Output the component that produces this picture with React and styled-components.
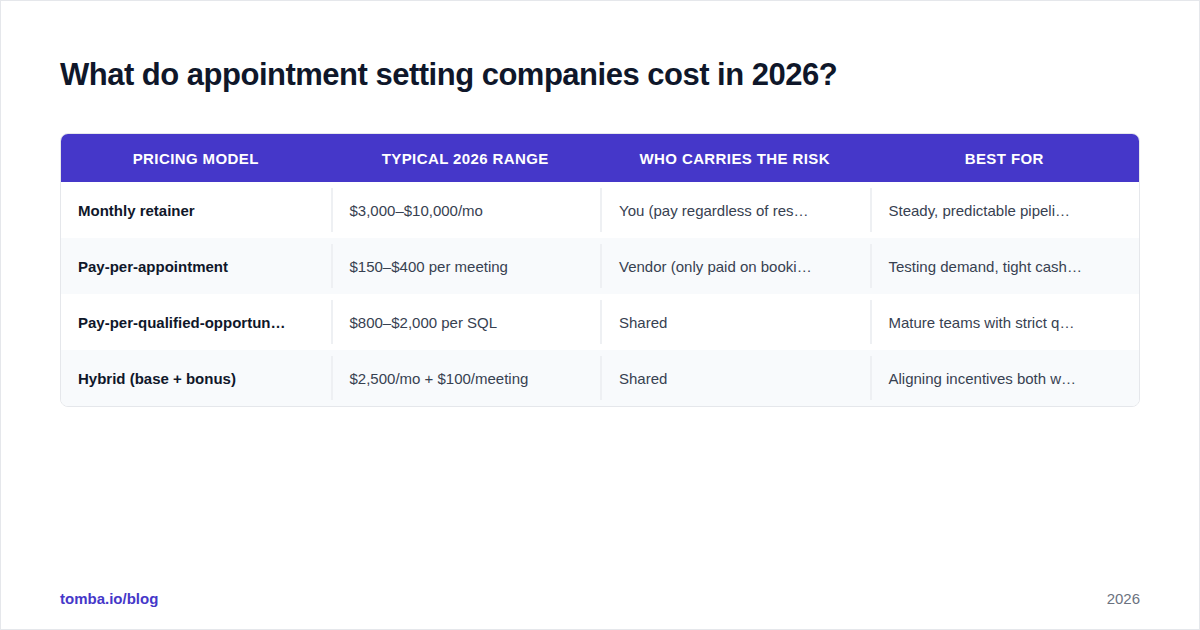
import React from 'react';
import styled, { createGlobalStyle } from 'styled-components';

const Global = createGlobalStyle`
  html, body { margin: 0; padding: 0; }
  body { font-family: "Liberation Sans", Arial, sans-serif; background: #fff; }
`;

const Page = styled.div`
  width: 1200px;
  height: 630px;
  box-sizing: border-box;
  border: 1px solid #e5e7eb;
  padding: 54px 59px 20px;
  display: flex;
  flex-direction: column;
`;

const Title = styled.h1`
  margin: 0 0 38px;
  font-size: 31px;
  font-weight: 700;
  color: #0f172a;
  letter-spacing: -0.5px;
  line-height: 40px;
`;

const Table = styled.div`
  border: 1px solid #e5e7eb;
  border-radius: 8px;
  overflow: hidden;
`;

const Row = styled.div`
  display: grid;
  grid-template-columns: repeat(4, 1fr);
  height: ${p => (p.$head ? '48px' : '56px')};
  box-sizing: border-box;
  padding: ${p => (p.$head ? '0' : '6px 0')};
  background: ${p => (p.$head ? '#4537c9' : p.$alt ? '#f8fafc' : '#fff')};
`;

const HeadCell = styled.div`
  display: flex;
  align-items: center;
  justify-content: center;
  color: #fff;
  font-size: 15px;
  font-weight: 700;
  letter-spacing: 0.4px;
  text-transform: uppercase;
`;

const Cell = styled.div`
  display: flex;
  align-items: center;
  padding: 0 17px;
  min-width: 0;
  border-left: ${p => (p.$first ? 'none' : '2px solid #eef0f3')};
  color: ${p => (p.$first ? '#0f172a' : '#374151')};
  font-weight: ${p => (p.$first ? 700 : 400)};
  font-size: 15px;
  white-space: nowrap;
`;

const Footer = styled.div`
  margin-top: auto;
  display: flex;
  justify-content: space-between;
  align-items: center;
  padding-bottom: 2px;
  font-size: 15px;
`;

const Brand = styled.span`
  color: #4537c9;
  font-weight: 700;
`;

const Year = styled.span`
  color: #6b7280;
`;

const heads = ['Pricing model', 'Typical 2026 range', 'Who carries the risk', 'Best for'];
const rows = [
  ['Monthly retainer', '$3,000–$10,000/mo', 'You (pay regardless of res…', 'Steady, predictable pipeli…'],
  ['Pay-per-appointment', '$150–$400 per meeting', 'Vendor (only paid on booki…', 'Testing demand, tight cash…'],
  ['Pay-per-qualified-opportun…', '$800–$2,000 per SQL', 'Shared', 'Mature teams with strict q…'],
  ['Hybrid (base + bonus)', '$2,500/mo + $100/meeting', 'Shared', 'Aligning incentives both w…'],
];

export default function App() {
  return (
    <>
      <Global />
      <Page>
        <Title>What do appointment setting companies cost in 2026?</Title>
        <Table>
          <Row $head>
            {heads.map(h => <HeadCell key={h}>{h}</HeadCell>)}
          </Row>
          {rows.map((r, i) => (
            <Row key={i} $alt={i % 2 === 1}>
              {r.map((c, j) => <Cell key={j} $first={j === 0}>{c}</Cell>)}
            </Row>
          ))}
        </Table>
        <Footer>
          <Brand>tomba.io/blog</Brand>
          <Year>2026</Year>
        </Footer>
      </Page>
    </>
  );
}
